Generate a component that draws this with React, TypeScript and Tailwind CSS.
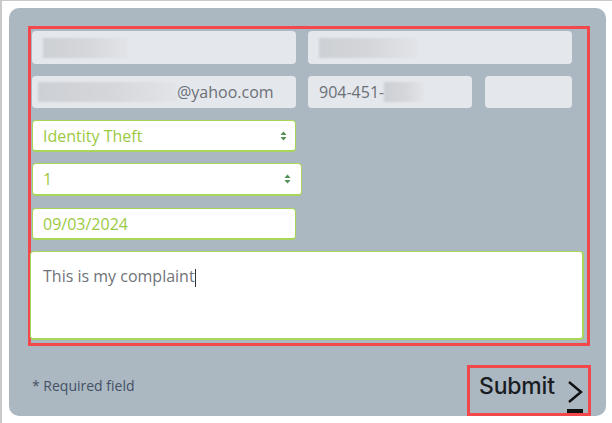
const font = { fontFamily: "'Open Sans', Lato, sans-serif" };

function Blur({ w }: { w: string }) {
  return <div className={`${w} h-[20px] bg-gradient-to-r from-[#cdd0d4] via-[#d4d6da] to-[#e2e4e8] blur-[1px]`} />;
}

function Arrows() {
  return (
    <svg width="7" height="10" viewBox="0 0 7 10" className="shrink-0">
      <path d="M3.5 0.5 L6.5 4 H0.5 Z" fill="#4f8f55" />
      <path d="M3.5 9.5 L6.5 6 H0.5 Z" fill="#4f8f55" />
    </svg>
  );
}

export default function App() {
  return (
    <div className="w-[612px] h-[423px] bg-white border-l-2 border-t border-[#c9c9c9] overflow-hidden" style={font}>
      <div className="ml-[7px] mt-[7px] w-[597px] h-[408px] rounded-[10px] bg-[#abb8c2] flex flex-col">
        {/* form area */}
        <div className="ml-[19px] mt-[18px] w-[562px] h-[321px] border-[3px] border-[#f2474b] px-[1px] pt-[2px] flex flex-col">
          <div className="flex gap-[12px]">
            <div className="w-[264px] h-[33px] rounded-[4px] bg-[#e4e7ec] flex items-center pl-[11px]">
              <Blur w="w-[85px]" />
            </div>
            <div className="w-[264px] h-[33px] rounded-[4px] bg-[#e4e7ec] flex items-center pl-[11px]">
              <Blur w="w-[99px]" />
            </div>
          </div>

          <div className="flex gap-[12px] mt-[12px]">
            <div className="w-[264px] h-[32px] rounded-[4px] bg-[#e4e7ec] flex items-center pl-[6px] text-[16px] text-[#6c7077]">
              <Blur w="w-[139px]" />
              <span>@yahoo.com</span>
            </div>
            <div className="w-[164px] h-[32px] rounded-[4px] bg-[#e4e7ec] flex items-center pl-[11px] text-[16px] text-[#6c7077]">
              <span>904-451-</span>
              <Blur w="w-[40px]" />
            </div>
            <div className="w-[87px] h-[32px] ml-[1px] rounded-[4px] bg-[#e4e7ec]" />
          </div>

          <div className="mt-[12px] w-[264px] h-[32px] rounded-[4px] bg-white border border-[#a9d65a] border-b-[2px] flex items-center justify-between pl-[10px] pr-[8px] text-[16px] text-[#9bc93f]">
            <span>Identity Theft</span>
            <Arrows />
          </div>

          <div className="mt-[11px] w-[270px] h-[33px] rounded-[4px] bg-white border border-[#a9d65a] border-b-[2px] flex items-center justify-between pl-[10px] pr-[10px] text-[16px] text-[#9bc93f]">
            <span>1</span>
            <Arrows />
          </div>

          <div className="mt-[12px] w-[264px] h-[32px] rounded-[4px] bg-white border border-[#a9d65a] border-b-[2px] flex items-center pl-[10px] text-[16px] text-[#9bc93f]">
            <span>09/03/2024</span>
          </div>

          <div className="mt-[11px] -ml-[2px] w-[554px] h-[89px] rounded-[4px] bg-white border border-[#a9d65a] border-b-[2px] border-r-[2px] pl-[12px] pt-[12px] text-[16px] text-[#707379]">
            <span>This is my complaint</span>
            <span className="inline-block w-px h-[18px] bg-[#333] align-middle" />
          </div>
        </div>

        {/* footer */}
        <div className="flex items-start justify-between">
          <span className="ml-[23px] mt-[29px] text-[14px] text-[#445063]">* Required field</span>
          <div className="mr-[15px] mt-[19px] w-[124px] h-[51px] border-[3px] border-[#f2474b] flex items-start pl-[9px] pt-[2px]">
            <span className="text-[23px] font-medium text-[#1a1d22] leading-[32px] tracking-[-0.2px]" style={{ fontFamily: "Inter, sans-serif" }}>
              Submit
            </span>
            <div className="ml-[12px] mt-[11px] flex flex-col items-center">
              <svg width="16" height="22" viewBox="0 0 16 22">
                <path d="M2 1 L14 11 L2 21" fill="none" stroke="#111" strokeWidth="2.4" />
              </svg>
              <div className="mt-[6px] w-[16px] h-[4px] bg-[#111]" />
            </div>
          </div>
        </div>
      </div>
    </div>
  );
}
